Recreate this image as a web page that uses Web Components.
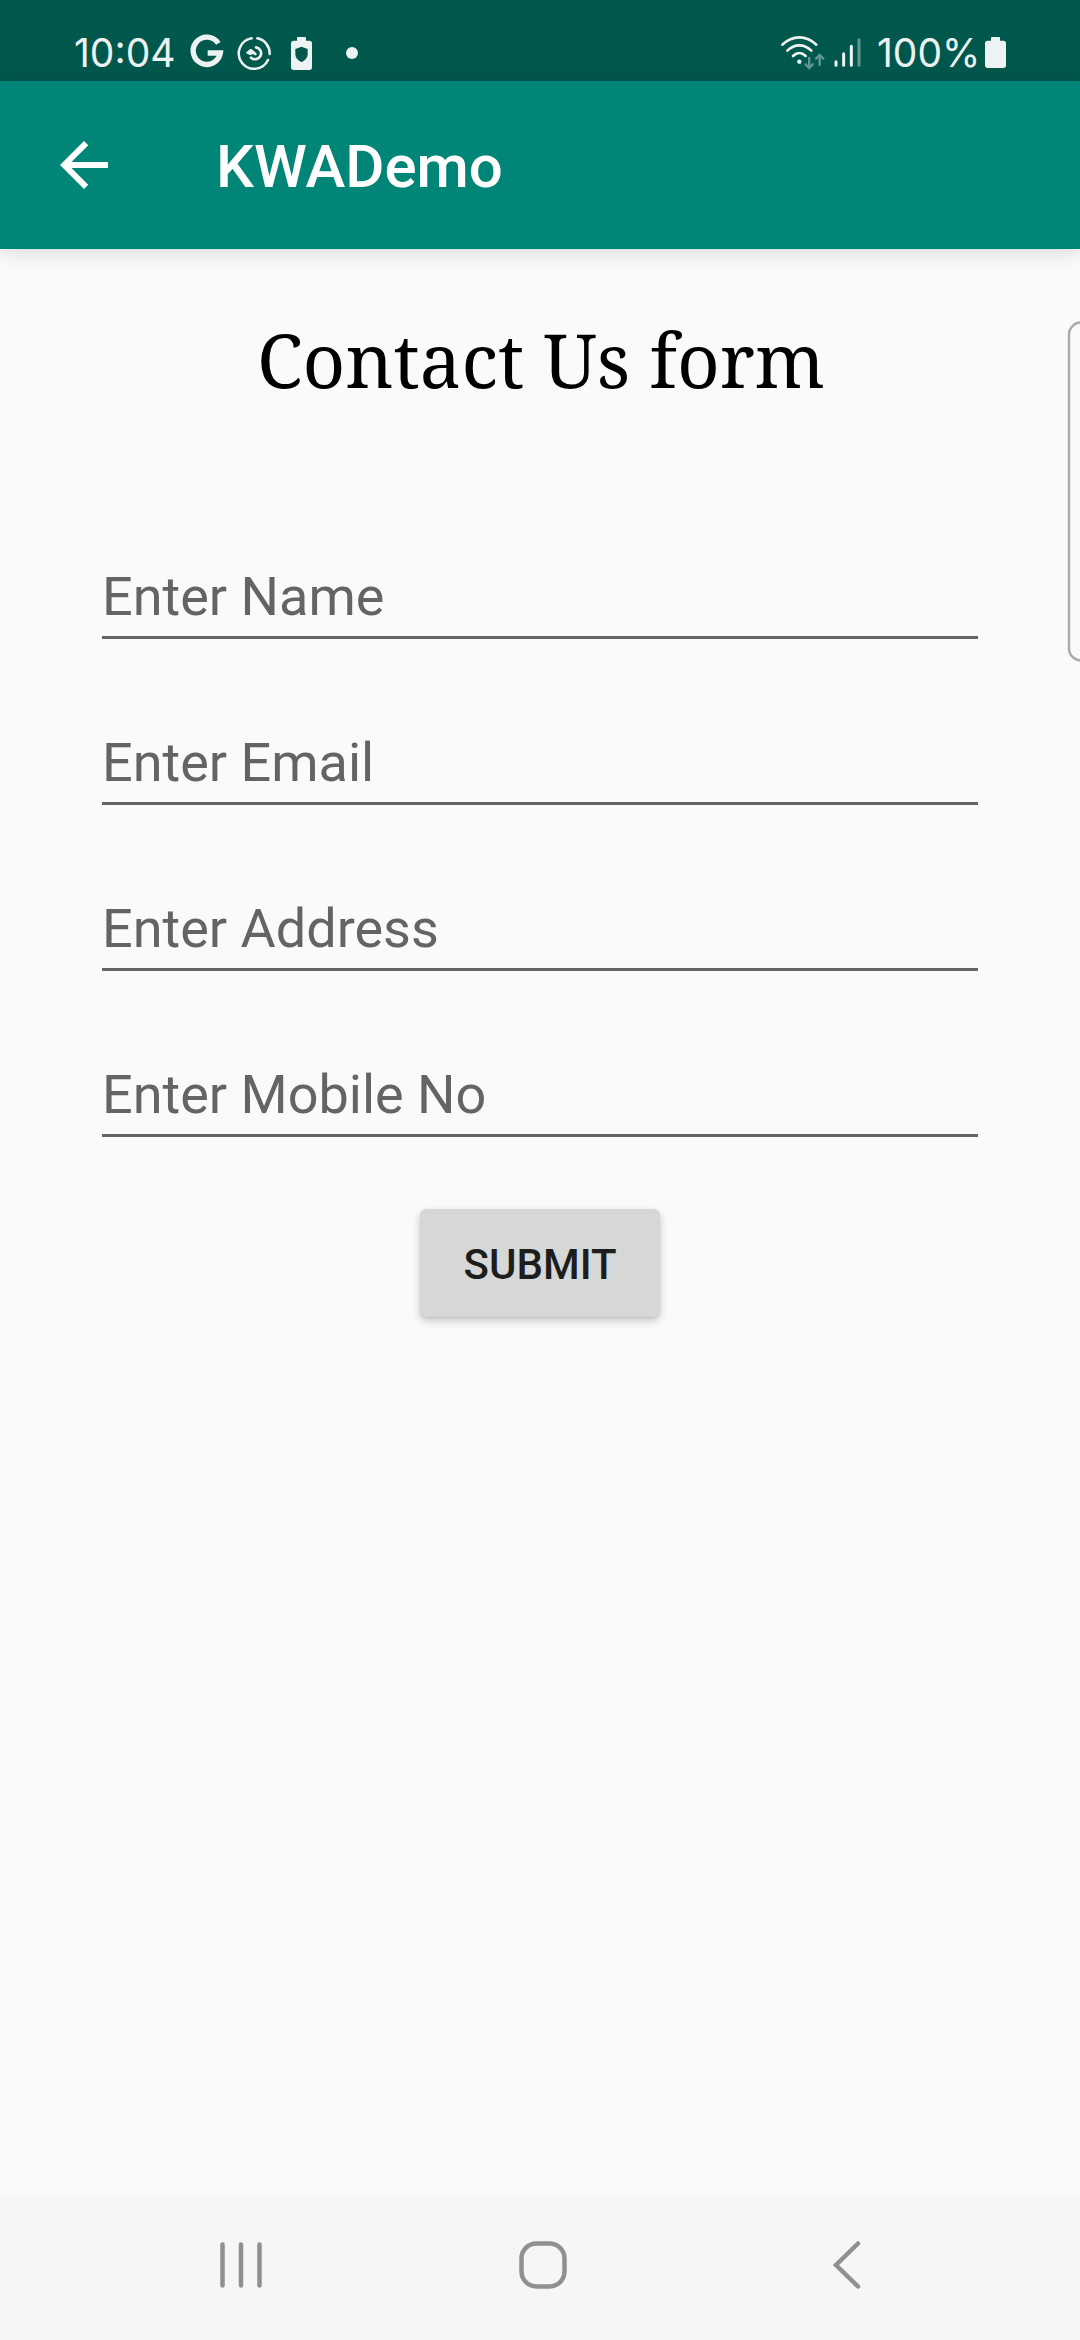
<!DOCTYPE html>
<html lang="en">
<head>
<meta charset="utf-8">
<title>KWADemo</title>
<style>
html, body { margin: 0; }
body { width: 1080px; height: 2340px; overflow: hidden; background: #fafafa; font-family: Roboto, "Liberation Sans", sans-serif; }
</style>
</head>
<body>
<kwa-screen>
  <status-bar slot="status" time="10:04" battery="100%"></status-bar>
  <app-bar slot="bar">KWADemo</app-bar>
  <contact-form heading="Contact Us form">
    <text-field>Enter Name</text-field>
    <text-field>Enter Email</text-field>
    <text-field>Enter Address</text-field>
    <text-field>Enter Mobile No</text-field>
    <raised-button slot="action">SUBMIT</raised-button>
  </contact-form>
  <edge-handle slot="edge"></edge-handle>
  <nav-bar slot="nav"></nav-bar>
</kwa-screen>
<script>
const define = (name, html) => customElements.define(name, class extends HTMLElement {
  constructor() {
    super();
    const t = document.createElement('template');
    t.innerHTML = html;
    this.attachShadow({ mode: 'open' }).append(t.content.cloneNode(true));
    for (const el of this.shadowRoot.querySelectorAll('[data-attr]'))
      el.textContent = this.getAttribute(el.dataset.attr) || '';
  }
});

define('kwa-screen', `
<style>
:host { display: flex; flex-direction: column; height: 2340px; position: relative; background: #fafafa; }
main { flex: 1; min-height: 0; }
</style>
<slot name="status"></slot><slot name="bar"></slot>
<main><slot></slot></main>
<slot name="nav"></slot><slot name="edge"></slot>`);

define('status-bar', `
<style>
:host { display: flex; justify-content: space-between; box-sizing: border-box; height: 81px; padding: 0 73px 0 74px; background: #00574b; color: #edf3f2; font: 400 39px/106px Inter, Roboto, sans-serif; }
div { display: flex; height: 81px; }
svg { height: 81px; display: block; flex: none; }
.time { width: 116px; white-space: nowrap; }
.level { width: 107px; margin-left: 16px; white-space: nowrap; }
</style>
<div>
  <span class="time" data-attr="time"></span>
  <svg width="34" viewBox="390 -60 102 243"><path d="M475 70A41 41 0 1 0 481 99H443" fill="none" stroke="#edf3f2" stroke-width="16"/></svg>
  <svg width="35" viewBox="531 -60 105 243" style="margin-left:13px" fill="none" stroke="#edf3f2" stroke-width="7.5" stroke-linecap="round"><path d="M575 55A46 46 0 1 0 624 120M592 55A46 46 0 0 1 629 102"/><path stroke-width="8" d="M588 82A18 18 0 1 1 573 113M586 102L573 91"/><path d="M560 98L570 90L580 100L570 103Z" fill="#edf3f2" stroke-width="4" stroke-linejoin="round"/></svg>
  <svg width="23" viewBox="690 -60 69 243" style="margin-left:18px"><path fill="#edf3f2" fill-rule="evenodd" d="M711 62V54Q711 51 714 51H735Q738 51 738 54V62H748Q756 62 756 70V142Q756 150 748 150H701Q693 150 693 142V70Q693 62 701 62ZM724.500 80L706 87V102C706 114 715 122 724.500 126C734 122 743 114 743 102V87Z"/></svg>
  <svg width="14" viewBox="855 -60 42 243" style="margin-left:32px"><circle cx="876" cy="99" r="18" fill="#edf3f2"/></svg>
</div>
<div>
  <svg width="45" viewBox="60 -60 135 243" fill="none" stroke="#edf3f2" stroke-width="8" stroke-linecap="round"><path d="M67 74Q90 52 118 52Q146 52 169 74M82 92Q98 76 118 76Q138 76 154 92M99 108Q108 99 118 99Q128 99 137 108"/><circle cx="118" cy="125" r="6.500" fill="#edf3f2" stroke="none"/><path stroke="#60988f" stroke-width="7" d="M147.500 114V143M137 133L147.500 144L158 133M179 135V106M168 116L179 105L190 116"/></svg>
  <svg width="28" viewBox="219 -60 84 243" style="margin-left:8px" stroke="#edf3f2" stroke-width="9" stroke-linecap="round"><path d="M228 125V136M251 101V136M274 79V136"/><path stroke="#60988f" d="M297 59V136"/></svg>
  <span class="level" data-attr="battery"></span>
  <svg width="23" viewBox="672 -60 69 243"><path fill="#edf3f2" d="M693 62V54Q693 51 696 51H717Q720 51 720 54V62H730Q738 62 738 70V136Q738 144 730 144H683Q675 144 675 136V70Q675 62 683 62Z"/></svg>
</div>`);

define('app-bar', `
<style>
:host { display: flex; align-items: center; height: 168px; padding-left: 48px; background: #008577; color: #fff; font-size: 60px; font-weight: 500; line-height: 70px; box-shadow: 0 4px 18px rgba(0,0,0,.13); position: relative; }
svg { margin-right: 96px; }
span { padding-top: 3px; }
</style>
<svg width="72" height="72" viewBox="0 0 24 24" fill="#fff"><path d="M20 11H7.830l5.590-5.590L12 4l-8 8 8 8 1.410-1.410L7.830 13H20z"/></svg>
<span><slot></slot></span>`);

define('contact-form', `
<style>
:host { display: flex; flex-direction: column; align-items: center; padding: 60px 102px 0; }
h1 { margin: 0; height: 161px; padding-left: 2px; font: 400 74.3px/102px "Noto Serif", "DejaVu Serif Condensed", "DejaVu Serif", serif; color: #000; white-space: nowrap; }
.fields { align-self: stretch; display: flex; flex-direction: column; gap: 66px; margin-bottom: 70px; padding-top: 69px; }
</style>
<h1 data-attr="heading"></h1>
<div class="fields"><slot></slot></div>
<slot name="action"></slot>`);

define('text-field', `
<style>
:host { display: block; box-sizing: border-box; height: 100px; border-bottom: 3px solid #646464; color: #646464; font-size: 54px; line-height: 64px; padding-top: 26px; }
</style><slot></slot>`);

define('raised-button', `
<style>
:host { display: flex; align-items: center; justify-content: center; box-sizing: border-box; width: 240px; height: 108px; margin-top: 2px; padding-top: 4px; border-radius: 6px; background: #d6d8d7; color: #1c1d1c; font-size: 42px; font-weight: 500; line-height: 50px; box-shadow: 0 4px 9px rgba(0,0,0,.2), 0 1px 2px rgba(0,0,0,.08); }
</style><slot></slot>`);

define('edge-handle', `
<style>
:host { display: block; position: absolute; right: 0; top: 321px; width: 13px; height: 341px; }
svg { display: block; }
</style>
<svg width="13" height="341" fill="none"><path d="M14 1.500A12 12 0 0 0 2 13.500V327.500A12 12 0 0 0 14 339.500" stroke="#aaa" stroke-width="2.500"/></svg>`);

define('nav-bar', `
<style>
:host { display: flex; align-items: center; box-sizing: border-box; height: 144px; padding: 0 219px; background: #f6f6f8; }
svg { display: block; margin-top: -6px; }
.home { margin: -6px 264px 0 255px; }
</style>
<svg width="44" height="50" stroke="#909090" stroke-width="4.500" stroke-linecap="round"><path d="M3.500 4.500V45.500M22 4.500V45.500M40.500 4.500V45.500"/></svg>
<svg class="home" width="50" height="50" fill="none" stroke="#909090" stroke-width="4.500"><rect x="3.500" y="3.500" width="43" height="43" rx="15"/></svg>
<svg width="30" height="50" fill="none" stroke="#909090" stroke-width="4.500" stroke-linecap="round"><path d="M27 3.500L5 25L27 46.500"/></svg>`);
</script>
</body>
</html>
